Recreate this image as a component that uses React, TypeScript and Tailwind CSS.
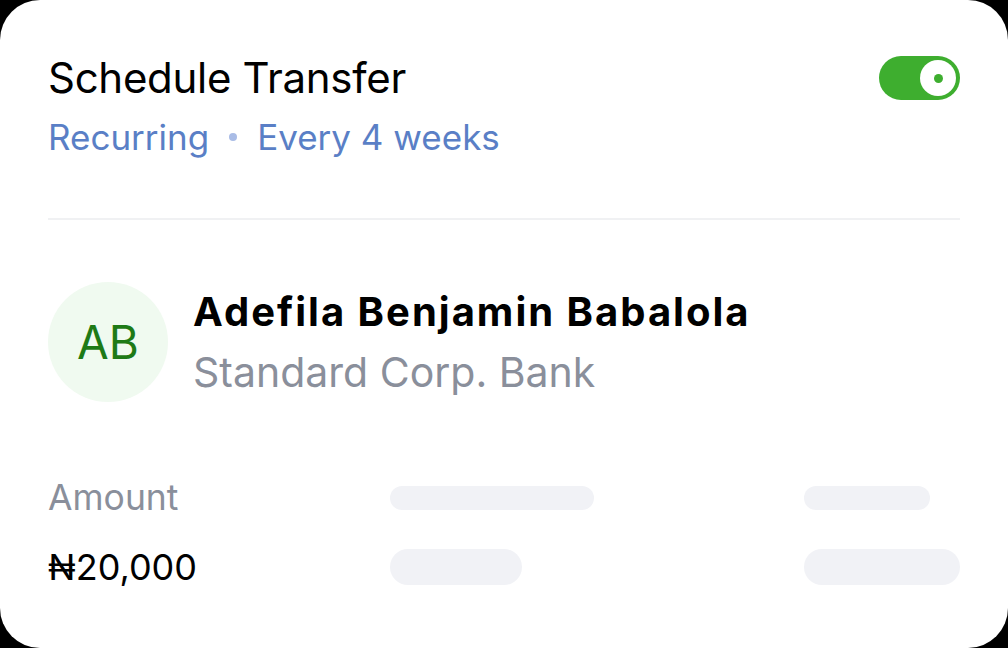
export default function App() {
  const font = { fontFamily: 'Inter, "Noto Sans", sans-serif' };
  return (
    <div className="w-[1008px] h-[648px] bg-black" style={font}>
      <div className="w-full h-full bg-white rounded-[40px] px-12 pt-[52px]">
        {/* header */}
        <div className="flex justify-between items-start">
          <div>
            <h1 className="text-[42px] leading-[52px] text-black tracking-[-0.3px]">Schedule Transfer</h1>
            <div className="flex items-center mt-[10px] text-[35px] leading-[46px] text-[#5a7fc6]">
              <span>Recurring</span>
              <span className="w-[8px] h-[8px] rounded-full bg-[#a9bce6] mx-[20px]" />
              <span>Every 4 weeks</span>
            </div>
          </div>
          <div className="mt-[4px] w-[81px] h-[44px] rounded-full bg-[#3eae2f] flex items-center justify-end pr-[4px]">
            <div className="w-[36px] h-[36px] rounded-full bg-white flex items-center justify-center">
              <div className="w-[9px] h-[9px] rounded-full bg-[#3eae2f]" />
            </div>
          </div>
        </div>

        <div className="h-[2px] bg-[#f0f1f3] mt-[58px]" />

        {/* recipient */}
        <div className="flex items-center gap-[25px] mt-[62px]">
          <div className="w-[120px] h-[120px] rounded-full bg-[#f0faf0] flex items-center justify-center text-[46px] text-[#1e7a16]">
            AB
          </div>
          <div>
            <div className="text-[40px] leading-[60px] font-bold tracking-[2px] text-black">Adefila Benjamin Babalola</div>
            <div className="text-[41px] leading-[60px] text-[#8a8f9b]">Standard Corp. Bank</div>
          </div>
        </div>

        {/* amount */}
        <div className="grid grid-cols-[342px_414px_1fr] mt-[74px] items-center">
          <div className="text-[35.5px] leading-[44px] text-[#8a8f9b]">Amount</div>
          <div className="h-[24px] w-[204px] rounded-full bg-[#f1f2f6]" />
          <div className="h-[24px] w-[126px] rounded-full bg-[#f1f2f6]" />
          <div className="text-[36px] leading-[52px] text-black mt-[21px]">₦20,000</div>
          <div className="h-[36px] w-[132px] rounded-full bg-[#f1f2f6] mt-[21px]" />
          <div className="h-[36px] w-[156px] rounded-full bg-[#f1f2f6] mt-[21px]" />
        </div>
      </div>
    </div>
  );
}
